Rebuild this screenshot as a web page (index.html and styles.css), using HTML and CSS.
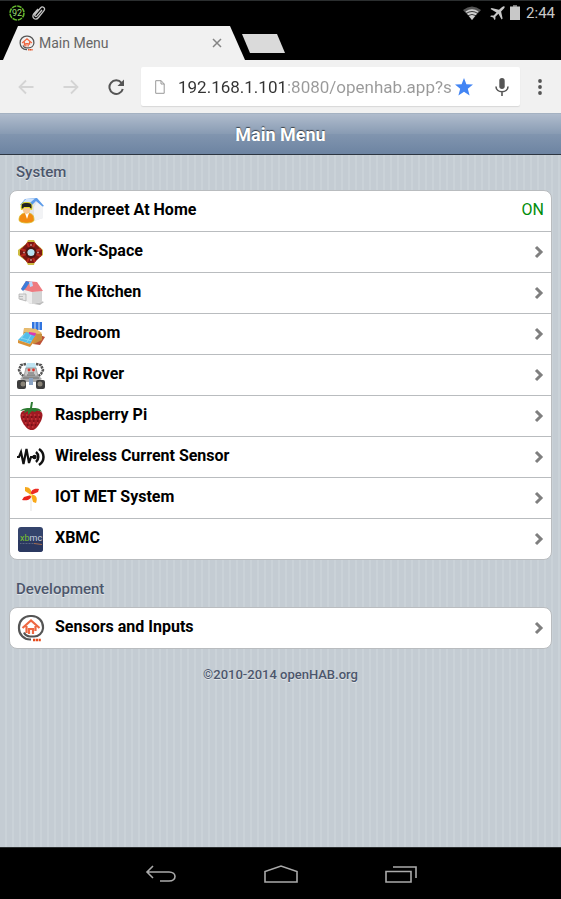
FILE: index.html
```html
<!DOCTYPE html>
<html lang="en">
<head>
  <meta charset="UTF-8">
  <title>Main Menu</title>
  <meta name="viewport" content="width=device-width, initial-scale=1.0">
  <link rel="stylesheet" href="styles.css">
</head>
<body>
  <!-- shared shapes -->
  <svg class="defs" aria-hidden="true">
    <symbol id="openhab" viewBox="0 0 28 28">
      <path d="M14 25.500h-1A11 11 0 0 1 2 14.500V13A11 11 0 0 1 13 2h2a11 11 0 0 1 11 11v1.500a9 9 0 0 1-9 8h-4a7 7 0 0 1-6-4" fill="none" stroke="#555" stroke-width="2.2"/>
      <path d="M5.500 14L14 6.500l8.500 7.500M9.500 12v7M18.500 12v5M12 20v-5h4v5" fill="none" stroke="#ee6842" stroke-width="2.2"/>
      <path d="M16 26h8" stroke="#e64a19" stroke-width="2.6" stroke-dasharray="2.2 .6"/>
    </symbol>
    <symbol id="chevron" viewBox="0 0 10 14">
      <path d="M2 2l5 5-5 5" fill="none" stroke="#7f7f7f" stroke-width="3"/>
    </symbol>
  </svg>

  <div class="status-bar">
    <svg class="battery-ring" viewBox="0 0 16 16">
      <circle cx="8" cy="8" r="7" fill="none" stroke="#62b52c" stroke-width="1.6" stroke-dasharray="4.6 .9"/>
      <text x="8" y="11" text-anchor="middle">92</text>
    </svg>
    <svg class="clip" viewBox="0 0 14 16">
      <path d="M10 5l-5 6c-1 1.500-3-.2-2-1.500L8.500 3c2-2.400 5.500 0 3.500 2.600L6.500 12.500c-2.800 3.400-7.500.2-4.800-3.500L6 4" fill="none" stroke="#c4c4c4" stroke-width="1.3"/>
    </svg>
    <div class="status-right">
      <svg class="wifi" viewBox="0 0 18 14">
        <path d="M0 4Q9-3 18 4L9 14z" fill="#555"/>
        <path d="M2.500 5.500Q9 1 15.500 5.500L9 14z" fill="#d0d0d0"/>
        <path d="M3 7.500q6-4 12 0M5 9.700q4-2.500 8 0" fill="none" stroke="#111" stroke-width=".8"/>
      </svg>
      <svg class="plane" viewBox="0 0 15 14">
        <path d="M14.500.5c-1-.8-2 0-3 1L9 3.800 1.500 2 .5 3l6 3.500-2.800 3H1l-.8.900 3 1.200L4.500 14l.9-.8v-2.500l3-2.900 3.200 5.700 1-1-1.500-7L13.500 3c1-1 1.500-1.800 1-2.500z" fill="#c8c8c8"/>
      </svg>
      <svg class="battery" viewBox="0 0 10 15">
        <path d="M3 0h4v2H3z" fill="#777"/>
        <path d="M0 1.500h10V15H0z" fill="#c8c8c8"/>
      </svg>
      <span class="clock">2:44</span>
    </div>
  </div>

  <div class="tab-strip">
    <div class="tab">
      <svg class="favicon"><use href="#openhab"/></svg>
      <span class="tab-title">Main Menu</span>
      <button class="tab-close" aria-label="Close tab">
        <svg viewBox="0 0 10 10"><path d="M1 1l8 8M9 1L1 9" fill="none" stroke="#858585" stroke-width="1.5"/></svg>
      </button>
    </div>
    <button class="new-tab" aria-label="New tab"></button>
  </div>

  <div class="toolbar">
    <button class="tool" aria-label="Back">
      <svg viewBox="0 0 16 16"><path d="M15.500 8H2M8 1.500L1.500 8 8 14.500" fill="none" stroke="#d4d4d4" stroke-width="1.8"/></svg>
    </button>
    <button class="tool" aria-label="Forward">
      <svg viewBox="0 0 16 16"><path d="M.5 8H14M8 1.500L14.500 8 8 14.500" fill="none" stroke="#d4d4d4" stroke-width="1.8"/></svg>
    </button>
    <button class="tool" aria-label="Reload">
      <svg viewBox="0 0 16 16"><path d="M13.500 3.800A6.800 6.800 0 1 0 14.800 10" fill="none" stroke="#555" stroke-width="2"/><path d="M16 .5V7H9.500z" fill="#555"/></svg>
    </button>
    <div class="address">
      <svg class="page-icon" viewBox="0 0 10 14"><path d="M.7.700h5.500l3 3.300v9.300H.7zM6 .7V4h3.300" fill="none" stroke="#999"/></svg>
      <input class="url" type="text" aria-label="Address" value="192.168.1.101:8080/openhab.app?s">
      <button class="star" aria-label="Bookmark">
        <svg viewBox="0 0 18 18"><path d="M9 0l2.400 6.300 6.600.300-5.200 4.200L14.600 17.500 9 13.700l-5.600 3.800 1.800-6.700L0 6.600l6.600-.3z" fill="#4285f4"/></svg>
      </button>
      <button class="mic" aria-label="Voice search">
        <svg viewBox="0 0 14 18"><rect x="4.300" y="0" width="5.400" height="11" rx="2.700" fill="#555"/><path d="M1 8.500c0 7 12 7 12 0M7 13.500V18" fill="none" stroke="#555" stroke-width="1.6"/></svg>
      </button>
    </div>
    <button class="more" aria-label="More">
      <svg viewBox="0 0 4 16"><g fill="#555"><circle cx="2" cy="2" r="1.900"/><circle cx="2" cy="8" r="1.900"/><circle cx="2" cy="14" r="1.900"/></g></svg>
    </button>
  </div>

  <header class="topbar">
    <h1>Main Menu</h1>
  </header>

  <main class="content">
    <h2 class="group-title">System</h2>
    <ul class="group">
      <li>
        <div class="row">
          <svg class="icon" viewBox="0 0 28 28">
            <path d="M12 9l8-6 6 6v12l-9 3-5-3z" fill="#e2e4e8"/>
            <path d="M20 5l6 4v12l-9 3V10z" fill="#f2f3f5"/>
            <path d="M3 8l5-6 12-1 7 8-1.500.500L19 4l-6 6z" fill="#5b9bea"/>
            <path d="M6 5l3-3 9-.5-7 6z" fill="#cfe2fa"/>
            <path d="M2 23c0-5 3-6 5-7h5c3 1 5 2 5 7 0 4-15 4-15 0z" fill="#f28a12" stroke="#d9be2c" stroke-width=".8"/>
            <path d="M8 16l2 6 2-6z" fill="#fff"/>
            <ellipse cx="9.500" cy="12" rx="3.800" ry="5" fill="#f7c795"/>
            <path d="M4.500 13C3 6 6 5.500 9.500 5.500s7 .5 5 7.500l-2-2.500H7z" fill="#222" stroke="#e9df22"/>
          </svg>
          <span class="label">Inderpreet At Home</span>
          <span class="state">ON</span>
        </div>
      </li>
      <li>
        <a class="row" href="#">
          <svg class="icon" viewBox="0 0 28 28">
            <path d="M11 2h6l2 4 4 3 3 3v5l-4 3-4 3-1 4h-6l-2-4-4-3-4-3v-5l4-3 4-3z" fill="#cdbb42"/>
            <path d="M11 4h6l8 8v5l-8 8h-6l-8-8v-5z" fill="#7c1712"/>
            <path d="M10 5l2 4M18 5l-2 4M10 24l2-4M18 24l-2-4M4 11l5 2M24 11l-5 2M4 18l5-2M24 18l-5-2" stroke="#b8281d" stroke-width="2"/>
            <circle cx="14" cy="14.500" r="5.500" fill="#4c1713"/>
            <circle cx="14" cy="14.500" r="3.600" fill="#b9e3f2"/>
            <path d="M14 6v2M14 21v2M6 14.500h2M20 14.500h2" stroke="#c08a88" stroke-width="1.500"/>
          </svg>
          <span class="label">Work-Space</span>
          <svg class="chevron"><use href="#chevron"/></svg>
        </a>
      </li>
      <li>
        <a class="row" href="#">
          <svg class="icon" viewBox="0 0 28 28">
            <path d="M11 24l12 2 4-3-6-2z" fill="#bbb"/>
            <path d="M6 11l15-1 4 2v11l-10 2-9-4z" fill="#eee"/>
            <path d="M15 13l10-1v11l-10 2z" fill="#d4d4d4"/>
            <path d="M4 10L9 2l11 1 6 9-11 1z" fill="#ee7b80"/>
            <path d="M4 10L9 2l4 1-4 6-3 3z" fill="#3d7cda"/>
            <path d="M12 3l3-1 1 5-3 1z" fill="#bdd9fa"/>
            <path d="M2 15h7v7l-7-2zM2 17.500h4M3 20h3" fill="#e5e5e5" stroke="#aaa" stroke-width=".7"/>
          </svg>
          <span class="label">The Kitchen</span>
          <svg class="chevron"><use href="#chevron"/></svg>
        </a>
      </li>
      <li>
        <a class="row" href="#">
          <svg class="icon" viewBox="0 0 28 28">
            <path d="M15 2h10v8H15z" fill="#3175df"/>
            <path d="M18 2v8M22 2v8" stroke="#d4e4fa"/>
            <path d="M16 24l7-9 5 2-5 8z" fill="#bd5238"/>
            <path d="M7 8l12 1 6 5v6l-8 4-11-8z" fill="#c9903f"/>
            <path d="M7 8l12 1 6 4-3 1-15-2z" fill="#e9bd70"/>
            <path d="M1 20l8-8 10 3-6 9z" fill="#54bde9"/>
            <path d="M12 12l7 1-1 3-6-2z" fill="#dc37b4"/>
            <path d="M1 20l12 4 6-9 1 3-7 9-12-4z" fill="#d99236"/>
            <path d="M4 18l11 3M8 13l-4 6M14 15l-4 7" stroke="#9adff5" stroke-width=".7"/>
          </svg>
          <span class="label">Bedroom</span>
          <svg class="chevron"><use href="#chevron"/></svg>
        </a>
      </li>
      <li>
        <a class="row" href="#">
          <svg class="icon" viewBox="0 0 28 28">
            <g fill="none" stroke="#555" stroke-width="2.500" stroke-dasharray="2.500 .7">
              <path d="M9 3L4 4 2 9l2 4 4 3M19 3l5 1 2 5-2 4-4 3"/>
            </g>
            <path d="M3 18l6-6h10l6 6-5 3H8z" fill="#aaa"/>
            <path d="M10 2h8l2 6H8z" fill="#bfe4f2"/>
            <path d="M9 7h10l2 8H7z" fill="#c9c9c9" stroke="#888" stroke-width=".7"/>
            <circle cx="12" cy="9" r="1.400" fill="#e0332b"/><circle cx="16.500" cy="9" r="1.400" fill="#e0332b"/>
            <path d="M11 12h6M10 14h8M6 17h16" stroke="#666"/>
            <path d="M12 17h4v7h-4z" fill="#8ba4c4"/>
            <rect x="0" y="19" width="9" height="9" rx="2" fill="#3d3d3d"/><rect x="19" y="19" width="9" height="9" rx="2" fill="#3d3d3d"/>
            <circle cx="6" cy="23" r="2.500" fill="#8a8478"/><circle cx="23" cy="23" r="2.500" fill="#8a8478"/>
          </svg>
          <span class="label">Rpi Rover</span>
          <svg class="chevron"><use href="#chevron"/></svg>
        </a>
      </li>
      <li>
        <a class="row" href="#">
          <svg class="icon" viewBox="0 0 28 28">
            <path d="M4 11c3-5 18-5 21 0 2 4-3 13-7 16-3 2-5 1-7 0-5-4-9-12-7-16z" fill="#a01a22"/>
            <path d="M5 13h20M6 17h17M8 21h13M11 25h7" stroke="#c93a3c" stroke-width="1.500" stroke-dasharray="1.500 2.500"/>
            <path d="M6 15h18M8 19h14M10 23h9" stroke="#6e0e16" stroke-width="1.500" stroke-dasharray="1.500 2.500"/>
            <path d="M3 9c3-3 6-3 10-3l1-6h2l-1 6c5 0 8 0 10 4-4-2-6-1-7 0l-3-1-4 4v-4l-4 2 1-3z" fill="#2d7b32"/>
          </svg>
          <span class="label">Raspberry Pi</span>
          <svg class="chevron"><use href="#chevron"/></svg>
        </a>
      </li>
      <li>
        <a class="row" href="#">
          <svg class="icon" viewBox="0 0 28 28">
            <path d="M0 14h2l2-5 2.500 12L9.500 6 12 20l2-6h4" fill="none" stroke="#111" stroke-width="2.2"/>
            <circle cx="17.500" cy="14" r="2.200" fill="#111"/>
            <path d="M19 9c3 2.500 3 7.500 0 10M22 6c6 4 6 12 0 16" fill="none" stroke="#111" stroke-width="2.5"/>
          </svg>
          <span class="label">Wireless Current Sensor</span>
          <svg class="chevron"><use href="#chevron"/></svg>
        </a>
      </li>
      <li>
        <a class="row" href="#">
          <svg class="icon" viewBox="0 0 28 28">
            <path d="M14 11v16" stroke="#e3e3e3"/>
            <path d="M14 11L8 7V3c5 0 7 3 6 8z" fill="#f5a81c"/>
            <path d="M14 11c-1-5 3-7 8-6l-1 3z" fill="#ec2b23"/>
            <path d="M14 11c5-1 7 3 5 8l-3-1z" fill="#f9a818"/>
            <path d="M14 11c1 4-3 6-9 5l2-3z" fill="#e9231d"/>
            <circle cx="14" cy="11" r="1.300" fill="#ffe36a"/>
          </svg>
          <span class="label">IOT MET System</span>
          <svg class="chevron"><use href="#chevron"/></svg>
        </a>
      </li>
      <li>
        <a class="row" href="#">
          <svg class="icon" viewBox="0 0 28 28">
            <rect x="1" y="2" width="25" height="25" rx="3" fill="#34446c"/>
            <path d="M1 15h25v9a3 3 0 0 1-3 3H4a3 3 0 0 1-3-3z" fill="#2a3860"/>
            <text class="xbmc-text" x="3" y="16"><tspan fill="#7ac32c">xb</tspan><tspan fill="#c5d0dd">mc</tspan></text>
            <path d="M3 18.500h14" stroke="#68748e" stroke-width=".8" stroke-dasharray="1 .5"/>
            <path d="M17 18.500l8 1" stroke="#a66d50"/>
          </svg>
          <span class="label">XBMC</span>
          <svg class="chevron"><use href="#chevron"/></svg>
        </a>
      </li>
    </ul>

    <h2 class="group-title">Development</h2>
    <ul class="group">
      <li>
        <a class="row" href="#">
          <svg class="icon"><use href="#openhab"/></svg>
          <span class="label">Sensors and Inputs</span>
          <svg class="chevron"><use href="#chevron"/></svg>
        </a>
      </li>
    </ul>

    <footer>©2010-2014 openHAB.org</footer>
  </main>

  <nav class="nav-bar">
    <button aria-label="Back">
      <svg viewBox="0 0 34 18"><path d="M9 1L3 7l6 6M3 7h22c8 0 8 9 0 9H16" fill="none" stroke="#aaa" stroke-width="1.6"/></svg>
    </button>
    <button aria-label="Home">
      <svg viewBox="0 0 34 18"><path d="M1 17V6.500L17 1l16 5.500V17z" fill="none" stroke="#aaa" stroke-width="1.6"/></svg>
    </button>
    <button aria-label="Recent apps">
      <svg viewBox="0 0 34 18"><path d="M2 6.500h25V17H2zM9 2h23v11" fill="none" stroke="#aaa" stroke-width="1.6"/></svg>
    </button>
  </nav>
</body>
</html>
```
FILE: styles.css
```css
:root {
  --chrome: #f1f1f1;
  --group-text: #4c566c;
  --border: #b9bcbf;
}

* {
  box-sizing: border-box;
}

body {
  margin: 0;
  min-height: 100vh;
  display: flex;
  flex-direction: column;
  font-family: Roboto, sans-serif;
  background: #000;
}

button {
  display: flex;
  align-items: center;
  justify-content: center;
  padding: 0;
  border: none;
  background: none;
  cursor: pointer;
}

.defs {
  display: none;
}

/* android status bar */
.status-bar {
  display: flex;
  align-items: center;
  height: 26px;
  padding: 0 6px 2px 9px;
  border-top: 1px solid #2b2e2f;
  gap: 7px;
}

.battery-ring {
  width: 16px;
  height: 16px;
}

.battery-ring text {
  font-size: 9px;
  fill: #9ddc74;
}

.clip {
  width: 14px;
  height: 16px;
}

.status-right {
  display: flex;
  align-items: center;
  margin-left: auto;
}

.wifi {
  width: 18px;
  height: 14px;
  margin-right: 9px;
}

.plane {
  width: 15px;
  height: 14px;
  margin-right: 5px;
}

.battery {
  width: 10px;
  height: 15px;
  margin-right: 6px;
}

.clock {
  font-size: 15px;
  color: #c8c8c8;
}

/* browser tabs */
.tab-strip {
  display: flex;
  height: 34px;
  padding-left: 3px;
}

.tab {
  display: flex;
  align-items: center;
  width: 242px;
  padding: 0 21px 0 16px;
  background: var(--chrome);
  clip-path: polygon(15px 0, 227px 0, 100% 100%, 0 100%);
}

.favicon {
  width: 16px;
  height: 16px;
}

.tab-title {
  flex: 1;
  margin-left: 4px;
  font-size: 14px;
  color: #666;
}

.tab-close {
  width: 14px;
  height: 14px;
}

.tab-close svg {
  width: 10px;
  height: 10px;
}

.new-tab {
  width: 43px;
  height: 19px;
  margin: 8px 0 0 -3px;
  background: #dadada;
  clip-path: polygon(0 0, 35px 0, 100% 100%, 8px 100%);
}

/* browser toolbar */
.toolbar {
  display: flex;
  align-items: center;
  height: 53px;
  padding: 0 19px 0 18px;
  background: var(--chrome);
}

.tool {
  width: 16px;
  height: 16px;
  margin-right: 29px;
}

.tool svg {
  width: 16px;
  height: 16px;
}

.address {
  flex: 1;
  display: flex;
  align-items: center;
  min-width: 0;
  height: 39px;
  margin-left: -12px;
  padding: 0 11px 0 14px;
  background: #fff;
  border-radius: 2px;
  box-shadow: 0 1px 1px #d8d8d8;
}

.page-icon {
  width: 10px;
  height: 14px;
}

.url {
  flex: 1;
  min-width: 0;
  margin: 0 3px 0 13px;
  padding: 0;
  border: none;
  font: 17px/24px Roboto, sans-serif;
  color: transparent;
  /* host dark, rest of the url grey */
  background: linear-gradient(to right, #333 110px, #999 110px);
  -webkit-background-clip: text;
  background-clip: text;
}

.star svg {
  width: 18px;
  height: 18px;
}

.mic {
  margin-left: 22px;
}

.mic svg {
  width: 14px;
  height: 18px;
}

.more {
  margin-left: 18px;
}

.more svg {
  width: 4px;
  height: 16px;
}

/* page */
.topbar {
  display: flex;
  align-items: center;
  justify-content: center;
  height: 42px;
  border-top: 1px solid #a5b2c2;
  border-bottom: 1px solid #2d3642;
  background: linear-gradient(to bottom, #b0bccd, #889bb3 50%, #8195af 51%, #6d84a2);
}

h1 {
  margin: 0;
  font-size: 18px;
  font-weight: 700;
  color: #fff;
  text-shadow: 0 -1px 1px rgba(0, 0, 0, 0.6);
}

.content {
  flex: 1;
  padding: 6px 9px 0;
  background: repeating-linear-gradient(to right, #c4ccd3 0, #c4ccd3 5px, #cad2d8 5px, #cad2d8 7px);
}

.group-title {
  margin: 0 7px 7px;
  font-size: 15px;
  line-height: 22px;
  font-weight: 500;
  color: var(--group-text);
  text-shadow: 0 1px 0 rgba(255, 255, 255, 0.5);
}

.group {
  margin: 0 0 18px;
  padding: 0;
  list-style: none;
  background: #fff;
  border: 1px solid var(--border);
  border-radius: 8px;
}

.group li + li {
  border-top: 1px solid var(--border);
}

.row {
  display: flex;
  align-items: center;
  height: 40px;
  padding: 0 7px;
  color: #000;
  text-decoration: none;
}

.icon {
  width: 28px;
  height: 28px;
}

.xbmc-text {
  font-size: 9px;
}

.label,
.state {
  padding-bottom: 2px;
  font-size: 16px;
  line-height: 20px;
}

.label {
  flex: 1;
  margin-left: 10px;
  font-weight: 700;
}

.state {
  color: #008c0a;
}

.chevron {
  width: 10px;
  height: 14px;
}

footer {
  padding-bottom: 17px;
  font-size: 13px;
  line-height: 16px;
  font-weight: 500;
  text-align: center;
  color: var(--group-text);
  text-shadow: 0 1px 0 rgba(255, 255, 255, 0.5);
}

/* android navigation */
.nav-bar {
  display: flex;
  align-items: center;
  justify-content: center;
  gap: 86px;
  height: 52px;
  border-top: 1px solid #2b2e2f;
}

.nav-bar svg {
  width: 34px;
  height: 18px;
}
```
